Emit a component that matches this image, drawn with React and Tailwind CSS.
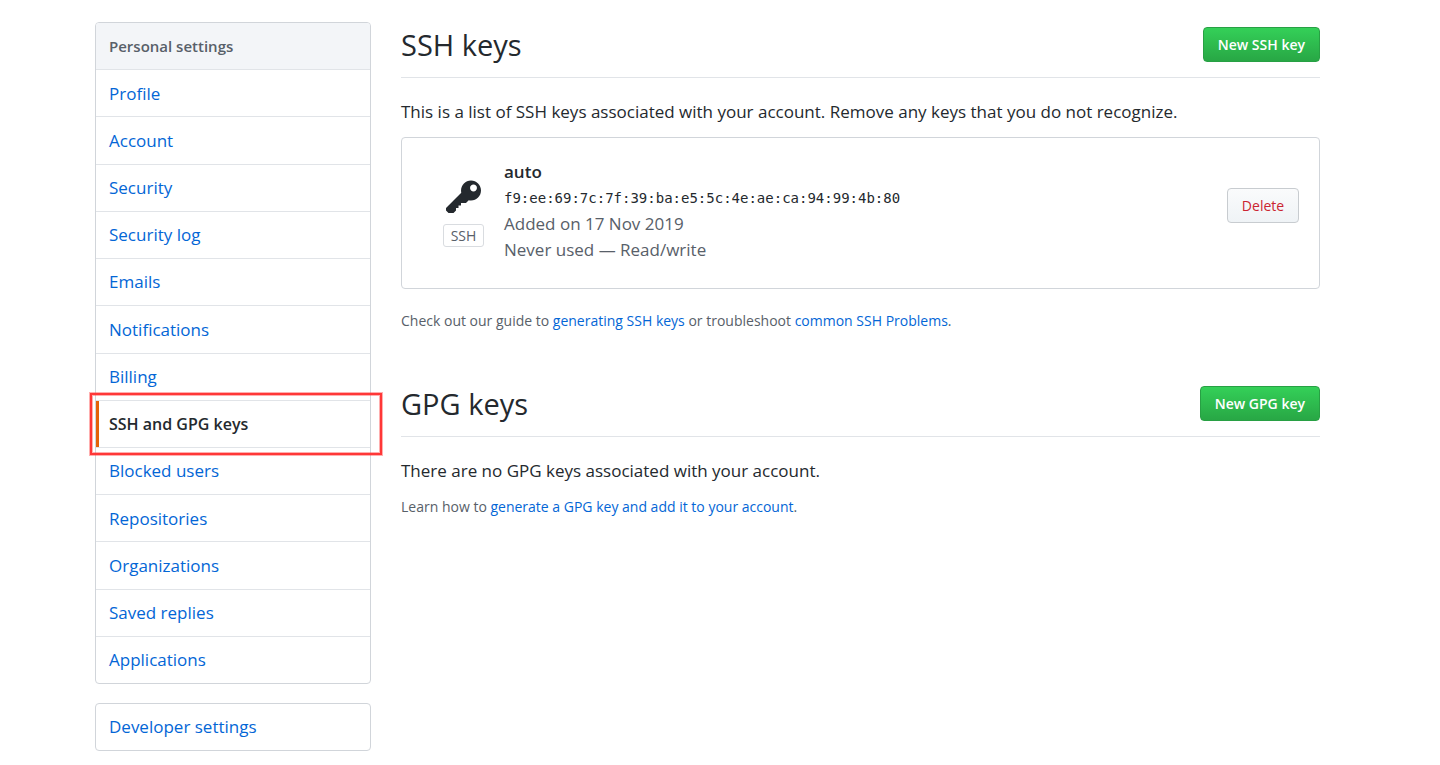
import React from "react";

const menuItems = [
  "Profile",
  "Account",
  "Security",
  "Security log",
  "Emails",
  "Notifications",
  "Billing",
  "SSH and GPG keys",
  "Blocked users",
  "Repositories",
  "Organizations",
  "Saved replies",
  "Applications",
];

function KeyIcon() {
  return (
    <svg width="35" height="40" viewBox="0 0 14 16" fill="currentColor" aria-hidden="true">
      <path
        fillRule="evenodd"
        d="M12.83 2.17C12.08 1.42 11.14 1.03 10 1c-1.13.03-2.08.42-2.83 1.17S6.04 3.86 6.01 5c0 .3.03.59.09.89L0 12v1l1 1h2l1-1v-1h1v-1h1v-1h2l1.09-1.11c.3.08.59.11.91.11 1.14-.03 2.08-.42 2.83-1.17S13.97 6.14 14 5c-.03-1.14-.42-2.08-1.17-2.83zM11 5.38c-.77 0-1.38-.61-1.38-1.38 0-.77.61-1.38 1.38-1.38.77 0 1.38.61 1.38 1.38 0 .77-.61 1.38-1.38 1.38z"
      />
    </svg>
  );
}

function Sidebar() {
  return (
    <aside className="flex w-[276px] shrink-0 flex-col gap-[19px]">
      <nav
        aria-label="Personal settings"
        className="flex min-h-[662px] flex-col rounded-[4px] border border-[#d1d5da]"
      >
        <h3 className="flex flex-1 items-center rounded-t-[3px] bg-[#f3f5f8] px-[13px] text-[15px] font-semibold text-[#586069]">
          Personal settings
        </h3>
        {menuItems.map((item) =>
          item === "SSH and GPG keys" ? (
            <a
              key={item}
              href="#"
              aria-current="page"
              className="relative flex flex-1 items-center border-t border-[#e1e4e8] px-[13px] text-base font-semibold text-[#24292e]"
            >
              <span className="absolute inset-y-0 left-0 w-[3px] bg-[#e36209]" />
              {/* red highlight frame */}
              <span className="absolute -top-2 -right-3 -bottom-2 -left-[6px] z-10 border-2 border-[#ff3737] ring-1 inset-ring-1 ring-[#ff3737]/40 inset-ring-[#ff3737]/40" />
              {item}
            </a>
          ) : (
            <a
              key={item}
              href="#"
              className="flex flex-1 items-center border-t border-[#e1e4e8] px-[13px] text-[#0366d6]"
            >
              {item}
            </a>
          )
        )}
      </nav>
      <nav aria-label="Developer" className="rounded-[4px] border border-[#d1d5da]">
        <a href="#" className="flex h-[46px] items-center px-[13px] text-[#0366d6]">
          Developer settings
        </a>
      </nav>
    </aside>
  );
}

function SectionHeader({ title, action }) {
  return (
    <div className="flex items-center justify-between border-b border-[#e1e4e8] pt-[5px] pb-[15px]">
      <h2 className="text-[29px] leading-[35px]">{title}</h2>
      <button
        type="button"
        className="h-[35px] rounded-[4px] border border-[#28a044] bg-linear-to-b from-[#34d058] to-[#28a745] px-[14px] text-sm font-semibold text-white"
      >
        {action}
      </button>
    </div>
  );
}

function KeyCard() {
  return (
    <div className="flex items-start gap-5 rounded-[4px] border border-[#d1d5da] pt-[21px] pr-5 pb-[25px] pl-[41px]">
      <div className="flex flex-col items-center gap-[6px] pt-[19px]">
        <KeyIcon />
        <span className="flex h-[23px] w-[41px] items-center justify-center rounded-[3px] border border-[#d9dce0] text-sm text-[#586069]">
          SSH
        </span>
      </div>
      <div className="flex-1 leading-[26px] text-[#586069]">
        <strong className="block font-semibold text-[#24292e]">auto</strong>
        <code className="block font-['DejaVu_Sans_Mono',monospace] text-sm leading-[26px] text-[#24292e]">
          f9:ee:69:7c:7f:39:ba:e5:5c:4e:ae:ca:94:99:4b:80
        </code>
        <p>Added on 17 Nov 2019</p>
        <p>Never used — Read/write</p>
      </div>
      <button
        type="button"
        className="mt-[29px] h-[35px] w-[72px] rounded-[4px] border border-[#c8ccd0] bg-linear-to-b from-[#fafbfc] to-[#eff3f6] text-sm font-medium text-[#cb2431]"
      >
        Delete
      </button>
    </div>
  );
}

export default function App() {
  return (
    <div className="flex gap-[30px] bg-white pt-[22px] pr-[120px] pb-[14px] pl-[95px] font-['Open_Sans',sans-serif] text-[17px] text-[#24292e]">
      <Sidebar />
      <main className="min-w-0 flex-1">
        <section>
          <SectionHeader title="SSH keys" action="New SSH key" />
          <p className="mt-[21px] mb-3 leading-[26px]">
            This is a list of SSH keys associated with your account. Remove any keys that you do not recognize.
          </p>
          <KeyCard />
          <p className="mt-[21px] text-sm leading-[22px] text-[#586069]">
            Check out our guide to <a href="#" className="text-[#0366d6]">generating SSH keys</a> or troubleshoot{" "}
            <a href="#" className="text-[#0366d6]">common SSH Problems</a>.
          </p>
        </section>
        <section className="mt-[49px]">
          <SectionHeader title="GPG keys" action="New GPG key" />
          <p className="mt-[21px] mb-3 leading-[26px]">There are no GPG keys associated with your account.</p>
          <p className="text-sm leading-[22px] text-[#586069]">
            Learn how to{" "}
            <a href="#" className="text-[#0366d6]">generate a GPG key and add it to your account</a>.
          </p>
        </section>
      </main>
    </div>
  );
}
